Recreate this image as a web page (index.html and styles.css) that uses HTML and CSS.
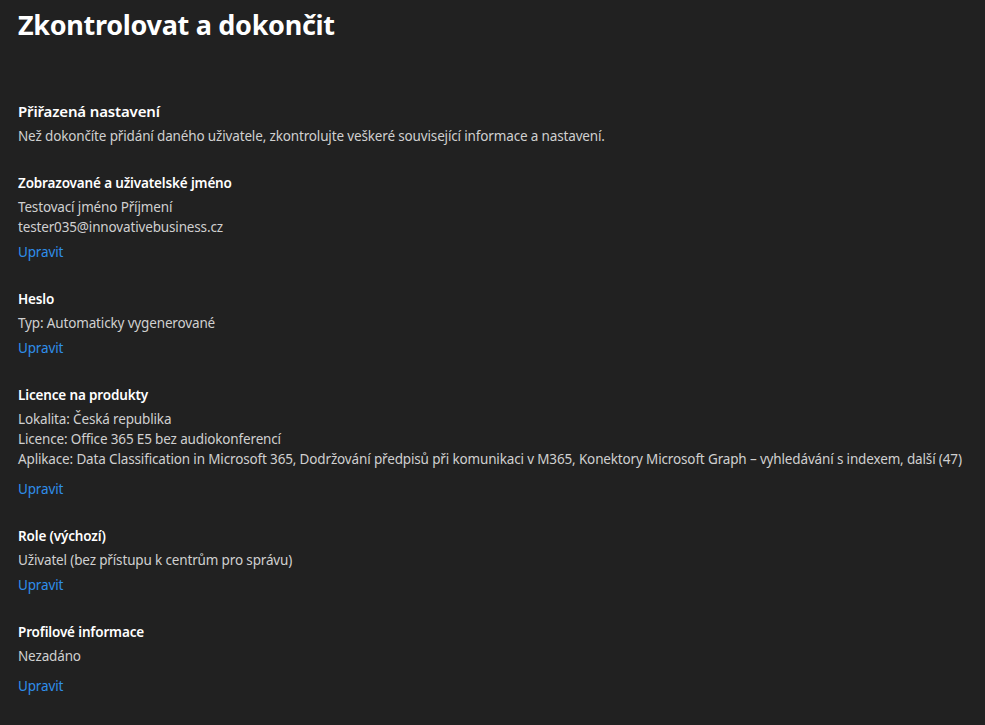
FILE: index.html
```html
<!DOCTYPE html>
<html lang="cs">
<head>
    <meta charset="UTF-8">
    <title>Zkontrolovat a dokončit</title>
    <link rel="stylesheet" href="styles.css">
</head>
<body>

<h1>Zkontrolovat a dokončit</h1>

<h2>Přiřazená nastavení</h2>
<p class="intro">Než dokončíte přidání daného uživatele, zkontrolujte veškeré související informace a nastavení.</p>

<div class="section">
    <h3>Zobrazované a uživatelské jméno</h3>
    <div class="line">Testovací jméno Příjmení</div>
    <div class="line">tester035@innovativebusiness.cz</div>
    <a class="edit" href="#">Upravit</a>
</div>

<div class="section">
    <h3>Heslo</h3>
    <div class="line">Typ: Automaticky vygenerované</div>
    <a class="edit" href="#">Upravit</a>
</div>

<div class="section">
    <h3>Licence na produkty</h3>
    <div class="line">Lokalita: Česká republika</div>
    <div class="line">Licence: Office 365 E5 bez audiokonferencí</div>
    <div class="line">Aplikace: Data Classification in Microsoft 365, Dodržování předpisů při komunikaci v M365, Konektory Microsoft Graph – vyhledávání s indexem, další (47)</div>
    <a class="edit wide" href="#">Upravit</a>
</div>

<div class="section">
    <h3>Role (výchozí)</h3>
    <div class="line">Uživatel (bez přístupu k centrům pro správu)</div>
    <a class="edit" href="#">Upravit</a>
</div>

<div class="section">
    <h3>Profilové informace</h3>
    <div class="line">Nezadáno</div>
    <a class="edit wide" href="#">Upravit</a>
</div>

</body>
</html>
```

FILE: styles.css
```css
body {
    font-family: 'Noto Sans', 'Open Sans', sans-serif;
    background-color: #212121;
    color: #d0d0d0;
    margin: 0;
    padding: 7px 18px 20px;
    font-size: 13.5px;
    letter-spacing: -0.15px;
    line-height: 20px;
}
h1 {
    margin: 0;
    font-size: 27px;
    letter-spacing: -0.3px;
    line-height: 36px;
    font-weight: 700;
    color: #fff;
}
h2 {
    margin: 57px 0 4px;
    font-size: 15px;
    line-height: 22px;
    font-weight: 600;
    color: #fff;
}
.intro {
    margin: 0;
}
.section {
    margin-top: 27px;
}
h3 {
    margin: 0 0 4px;
    font-size: 13.5px;
    line-height: 20px;
    font-weight: 600;
    color: #fff;
}
.line {
    white-space: nowrap;
}
.edit {
    display: block;
    width: max-content;
    margin-top: 5px;
    color: #2f8eea;
    text-decoration: none;
}
.edit.wide {
    margin-top: 10px;
}
```
